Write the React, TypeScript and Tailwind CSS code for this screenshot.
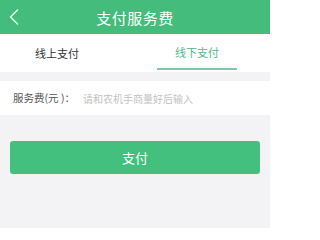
import React from "react";

const font = { fontFamily: '"Noto Sans CJK SC", "Noto Sans", sans-serif' };

export default function App() {
  return (
    <div className="w-[270px] h-[228px] overflow-hidden bg-[#f3f3f5] flex flex-col" style={font}>
      {/* header */}
      <header className="relative h-[34px] shrink-0 bg-[#44bd7c] flex items-center justify-center">
        <span className="absolute left-[9px] top-[9px] w-[10px] h-[16px]">
          <svg viewBox="0 0 10 16" className="w-full h-full" fill="none" stroke="#e6fff0" strokeWidth="1.5" strokeLinecap="round" strokeLinejoin="round">
            <path d="M8.5 1 L1.5 8 L8.5 15" />
          </svg>
        </span>
        <h1 className="text-[15px] leading-none text-white tracking-[0.5px]">支付服务费</h1>
      </header>

      {/* tabs */}
      <nav className="h-[38px] shrink-0 bg-white flex">
        <div className="w-[114px] flex items-center justify-center text-[11px] text-[#333]">线上支付</div>
        <div className="ml-[43px] w-[80px] flex flex-col">
          <div className="flex-1 flex items-center justify-center text-[11px] text-[#52b886] pt-[2px]">线下支付</div>
          <div className="h-[2px] bg-[#7ccaa6] mb-[2px]" />
        </div>
      </nav>

      {/* input row */}
      <div className="mt-[9px] h-[34px] shrink-0 bg-white flex items-center pl-[13px]">
        <span className="text-[10.5px] text-[#555]">服务费(元 )：</span>
        <span className="ml-[8px] text-[10px] text-[#c2c2c2]">请和农机手商量好后输入</span>
      </div>

      {/* pay button */}
      <div className="mt-[26px] px-[10px]">
        <button className="w-full h-[33px] rounded-[3px] bg-[#44c07e] text-white text-[13px] flex items-center justify-center">
          支付
        </button>
      </div>
    </div>
  );
}
